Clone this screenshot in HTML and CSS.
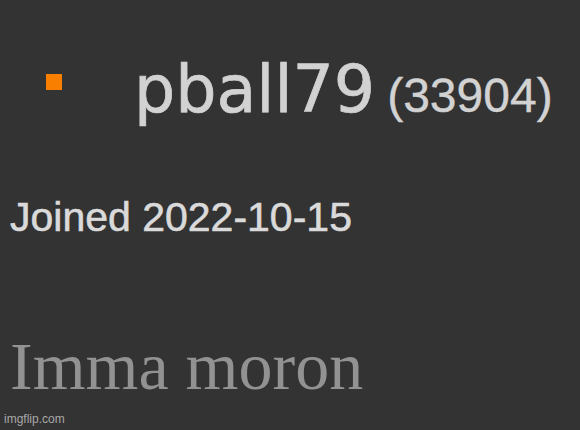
FILE: index.html
```
<!doctype html>
<html lang="en">
<head>
    <meta charset="UTF-8">
    <title>pball79</title>
    <link rel="stylesheet" href="styles.css">
</head>
<body>
    <div class="profile">
        <div class="user">
            <span class="bullet"></span>
            <span class="name">pball79</span>
            <span class="score">(33904)</span>
        </div>
        <div class="joined">Joined 2022-10-15</div>
        <div class="bio">Imma moron</div>
    </div>
    <div class="mark">imgflip.com</div>
</body>
</html>
```

FILE: styles.css
```
*{
    padding:0;
    margin:0;
}
html,body{
    height:100%;
}
body{
    background:#333333;
    overflow:hidden;
}
.profile{
    padding:57px 0 0 10px;
}
.user{
    display:flex;
    align-items:baseline;
    padding-left:36px;
}
.bullet{
    align-self:flex-start;
    width:16px;
    height:16px;
    margin-top:17px;
    background:#f97f00;
}
.name{
    margin-left:72px;
    font:65px/1 "DejaVu Sans", sans-serif;
    color:#d2d2d2;
    -webkit-text-stroke:0.7px #d2d2d2;
}
.score{
    margin-left:12px;
    font:48px/1 "Liberation Sans", Arial, sans-serif;
    color:#d2d2d2;
    -webkit-text-stroke:0.4px #d2d2d2;
}
.joined{
    margin-top:75px;
    font:41px/1 "Liberation Sans", Arial, sans-serif;
    color:#dadada;
    -webkit-text-stroke:0.6px #dadada;
}
.bio{
    margin-top:94px;
    font:68px/1 "Liberation Serif", "Times New Roman", serif;
    color:#929292;
}
.mark{
    position:absolute;
    left:4px;
    bottom:4px;
    font:12px "Liberation Sans", Arial, sans-serif;
    color:#a8a8a8;
}
```
